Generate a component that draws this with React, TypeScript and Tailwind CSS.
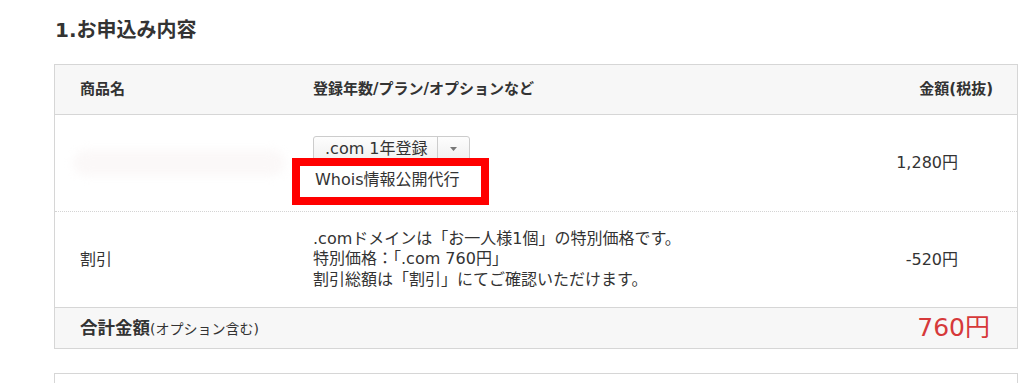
export default function App() {
  const font = { fontFamily: '"DejaVu Sans", "Noto Sans CJK JP", sans-serif' };

  return (
    <div className="w-[1035px] h-[383px] overflow-hidden bg-white text-[#333]" style={font}>
      <div className="pl-[54px] pt-[16px] w-[1018px]">
        <h2 className="text-[20px] leading-[28px] font-bold pl-[1px]">1.お申込み内容</h2>

        <div className="mt-[20px] border border-[#d6d6d6]">
          {/* header */}
          <div className="flex items-center h-[50px] bg-[#f7f7f7] border-b border-[#d6d6d6] text-[15px] font-bold">
            <div className="w-[258px] pl-[25px]">商品名</div>
            <div className="flex-1">登録年数/プラン/オプションなど</div>
            <div className="pr-[24px]">金額(税抜)</div>
          </div>

          {/* domain row */}
          <div className="flex items-center border-b border-dotted border-[#d4d4d4] text-[16px]">
            <div className="w-[258px] pl-[18px]">
              <div className="w-[212px] h-[26px] rounded-full bg-[#fbf8f8] blur-[5px]" />
            </div>
            <div className="flex-1 py-[21px]">
              <div className="relative">
                <div className="flex w-[157px] h-[26px] rounded-[3px] border border-[#cccccc] bg-gradient-to-b from-[#fdfdfd] to-[#f0f0f0]">
                  <div className="flex items-center pl-[11px] w-[124px] border-r border-[#cccccc] whitespace-nowrap">.com 1年登録</div>
                  <div className="flex-1 flex items-center justify-center">
                    <svg width="7" height="4" viewBox="0 0 7 4">
                      <path d="M0 0H7L3.5 4Z" fill="#777" />
                    </svg>
                  </div>
                </div>
                <div className="mt-[8px] leading-[20px] pl-[2px]">Whois情報公開代行</div>
                <div className="absolute left-[-21px] top-[22px] w-[197px] h-[47px] border-[8px] border-[#ff0000]" />
              </div>
            </div>
            <div className="pr-[59px] text-right">1,280円</div>
          </div>

          {/* discount row */}
          <div className="flex items-center h-[95px] text-[16px]">
            <div className="w-[258px] pl-[25px]">割引</div>
            <div className="flex-1 leading-[20.5px]">
              <div>.comドメインは「お一人様1個」の特別価格です。</div>
              <div>特別価格：「.com 760円」</div>
              <div>割引総額は「割引」にてご確認いただけます。</div>
            </div>
            <div className="pr-[59px] text-right">-520円</div>
          </div>

          {/* total row */}
          <div className="flex items-center h-[41px] bg-[#f7f7f7] border-t border-[#d6d6d6]">
            <div className="flex-1 pl-[25px]">
              <span className="text-[17.5px] font-bold">合計金額</span>
              <span className="text-[14px]">(オプション含む)</span>
            </div>
            <div className="pr-[27px] text-[25px] leading-[30px] text-[#d6393a]">760円</div>
          </div>
        </div>

        <div className="mt-[24px] h-[20px] border-t border-x border-[#d6d6d6]" />
      </div>
    </div>
  );
}
